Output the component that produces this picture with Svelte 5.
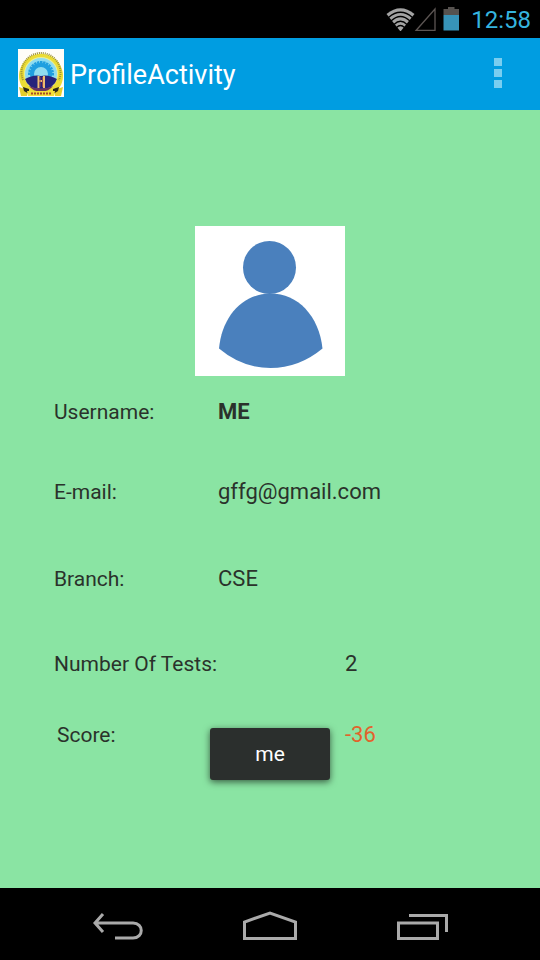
<script>
  const rows = [
    { label: 'Username:', value: 'ME', kind: 'name' },
    { label: 'E-mail:', value: 'gffg@gmail.com', kind: 'email' },
    { label: 'Branch:', value: 'CSE', kind: 'branch' },
    { label: 'Number Of Tests:', value: '2', kind: 'tests' },
    { label: 'Score:', value: '-36', kind: 'score' }
  ];
  const teeth = Array.from({ length: 13 }, (_, i) => 180 + i * 15);
</script>

<div class="screen">
  <div class="status">
    <svg width="76" height="26" viewBox="0 0 76 26" aria-hidden="true">
      <path d="M1.5 9Q15.5-2.500 29.500 9L15.500 26.500z" fill="#a3a3a3" />
      <g fill="none" stroke="#000" stroke-width="1.300">
        <path d="M3.500 12.500Q15.500 2 27.500 12.500" />
        <path d="M6 16Q15.500 7 25 16" />
        <path d="M9 19.500Q15.500 13 22 19.500" />
        <path d="M11.500 22.500Q15.500 18.500 19.500 22.500" />
      </g>
      <path d="M31 25.500L50 4V25.500z" fill="none" stroke="#5c5553" stroke-width="1.300" />
      <path d="M58.500 4H63V2H69.500V4H74V10H58.500z" fill="#56524f" />
      <path d="M58.500 10H74V25.500H58.500z" fill="#3793b8" />
    </svg>
    <time>12:58</time>
  </div>

  <header>
    <svg class="logo" width="46" height="48" viewBox="0 0 46 48" aria-hidden="true">
      <path d="M0 0H46V48H0z" fill="#fffdf8" />
      <path d="M3 36A22 22 0 1 1 43 36L38 44H8z" fill="#ebdc35" />
      <path d="M5 31A19.500 19.500 0 1 1 41 31" fill="none" stroke="#9c9038" stroke-width="2" stroke-dasharray="1 1" />
      <circle cx="23" cy="25" r="17" fill="#e9ef9a" />
      <circle cx="23" cy="25" r="16" fill="#8fdcf0" />
      <circle cx="23" cy="25" r="9" fill="#8fdcf0" stroke="#1f9fe0" stroke-width="4" />
      {#each teeth as angle}
        <path d="M33 24H36V26.500H33z" fill="#1f9fe0" transform="rotate({angle} 23 25)" />
      {/each}
      <path d="M7 30Q16 25 23 27Q30 25 39 30Q36 40 23 40T7 30z" fill="#26247b" />
      <path d="M11 37Q23 42 35 37Q31 42.500 23 42.500T11 37z" fill="#6d3560" />
      <path d="M20.500 27V39M26 27V39M20 32H26" stroke="#edbd70" stroke-width="2" />
      <path d="M22 28V38M24.500 28V38" stroke="#8f4350" />
      <path d="M1 38L10 41L9 47H3zM45 38L36 41L37 47H43z" fill="#e4ce2c" />
      <path d="M5 38L11 40V45L6 42zM41 38L35 40V45L40 42z" fill="#2b281a" />
      <path d="M9 42H37L36 47H10z" fill="#f2df39" />
      <path d="M13 44.500H34" stroke="#a84b25" stroke-width="2" stroke-dasharray="2 1" />
    </svg>
    <h1>ProfileActivity</h1>
    <button class="menu" aria-label="More options">
      <svg width="8" height="32" viewBox="0 0 8 32"><path d="M0 0H8V8H0zM0 11H8V19H0zM0 22H8V30H0z" fill="#79cef0" /></svg>
    </button>
  </header>

  <main>
    <svg class="avatar" width="150" height="150" viewBox="0 0 150 150" role="img" aria-label="Profile picture">
      <path d="M0 0H150V150H0z" fill="#fff" />
      <circle cx="74.500" cy="41.500" r="26.500" fill="#4a80bd" />
      <path d="M24 122.500C27 90 48 67.500 75.500 67.500S124 90 127.500 122.500Q104 142 75.500 142T24 122.500z" fill="#4a80bd" />
    </svg>
    <dl>
      {#each rows as row}
        <div class="row {row.kind}">
          <dt>{row.label}</dt>
          <dd>{row.value}</dd>
        </div>
      {/each}
    </dl>
  </main>

  <nav>
    <button aria-label="Back">
      <svg width="52" height="32" viewBox="0 0 52 32"><path d="M11 3L3 12L11 21M3 12H41C52 12 52 27 41 27H23" /></svg>
    </button>
    <button aria-label="Home">
      <svg width="56" height="32" viewBox="0 0 56 32"><path d="M2.500 27.500V11L28 2L53.500 11V27.500z" /></svg>
    </button>
    <button aria-label="Recent apps">
      <svg width="52" height="32" viewBox="0 0 52 32"><path d="M2.500 12H41.500V27.500H2.500zM13 4.500H50.500V21" /></svg>
    </button>
  </nav>

  <div class="toast" role="status">me</div>
</div>

<style>
  :global(body) {
    margin: 0;
    background: #000;
  }
  .screen {
    position: relative;
    display: flex;
    flex-direction: column;
    min-height: 100vh;
    font-family: Roboto, "Noto Sans", sans-serif;
    font-size: 22px;
    color: #2a322b;
  }
  .status {
    display: flex;
    justify-content: flex-end;
    align-items: center;
    gap: 10px;
    height: 38px;
    padding-right: 9px;
    background: #000;
    color: #35b4df;
    font-size: 24px;
  }
  .status svg {
    margin-top: -2px;
  }
  time {
    padding-top: 2px;
  }
  header {
    display: flex;
    align-items: center;
    height: 72px;
    padding: 0 18px;
    box-sizing: border-box;
    background: #009de1;
    color: #fff;
  }
  .logo {
    margin-top: -2px;
  }
  h1 {
    flex: 1;
    margin: 0 0 0 6px;
    padding-top: 2px;
    font-size: 27px;
    font-weight: 400;
    line-height: 32px;
  }
  button {
    display: flex;
    justify-content: center;
    align-items: center;
    border: 0;
    padding: 0;
    background: none;
  }
  .menu {
    width: 48px;
    height: 48px;
  }
  main {
    flex: 1;
    padding: 116px 54px 0;
    background: #8ae4a3;
  }
  .avatar {
    display: block;
    margin: 0 auto;
  }
  dl {
    margin: 21px 0 0;
  }
  .row {
    display: flex;
    align-items: baseline;
    line-height: 30px;
  }
  dt {
    width: 164px;
    font-size: 21px;
  }
  dd {
    margin: 0;
  }
  .name dd {
    font-weight: 700;
  }
  .email {
    margin-top: 50px;
  }
  .branch {
    margin-top: 57px;
  }
  .tests {
    margin-top: 55px;
  }
  .score {
    margin-top: 41px;
  }
  .tests dt,
  .score dt {
    width: 291px;
  }
  .score dt {
    box-sizing: border-box;
    padding-left: 3px;
  }
  .score dd {
    color: #e2622c;
  }
  nav {
    display: flex;
    justify-content: center;
    align-items: center;
    gap: 48px;
    height: 72px;
    box-sizing: border-box;
    padding-top: 5px;
    background: #000;
  }
  nav button {
    width: 104px;
    height: 64px;
  }
  nav path {
    fill: none;
    stroke: #aaa;
    stroke-width: 3;
  }
  .toast {
    position: absolute;
    bottom: 180px;
    left: 50%;
    width: 120px;
    transform: translateX(-50%);
    border-radius: 3px;
    background: #2b2f2d;
    box-shadow: 0 2px 7px rgba(0, 0, 0, 0.6);
    color: #fff;
    font-size: 21px;
    line-height: 52px;
    text-align: center;
  }
</style>
